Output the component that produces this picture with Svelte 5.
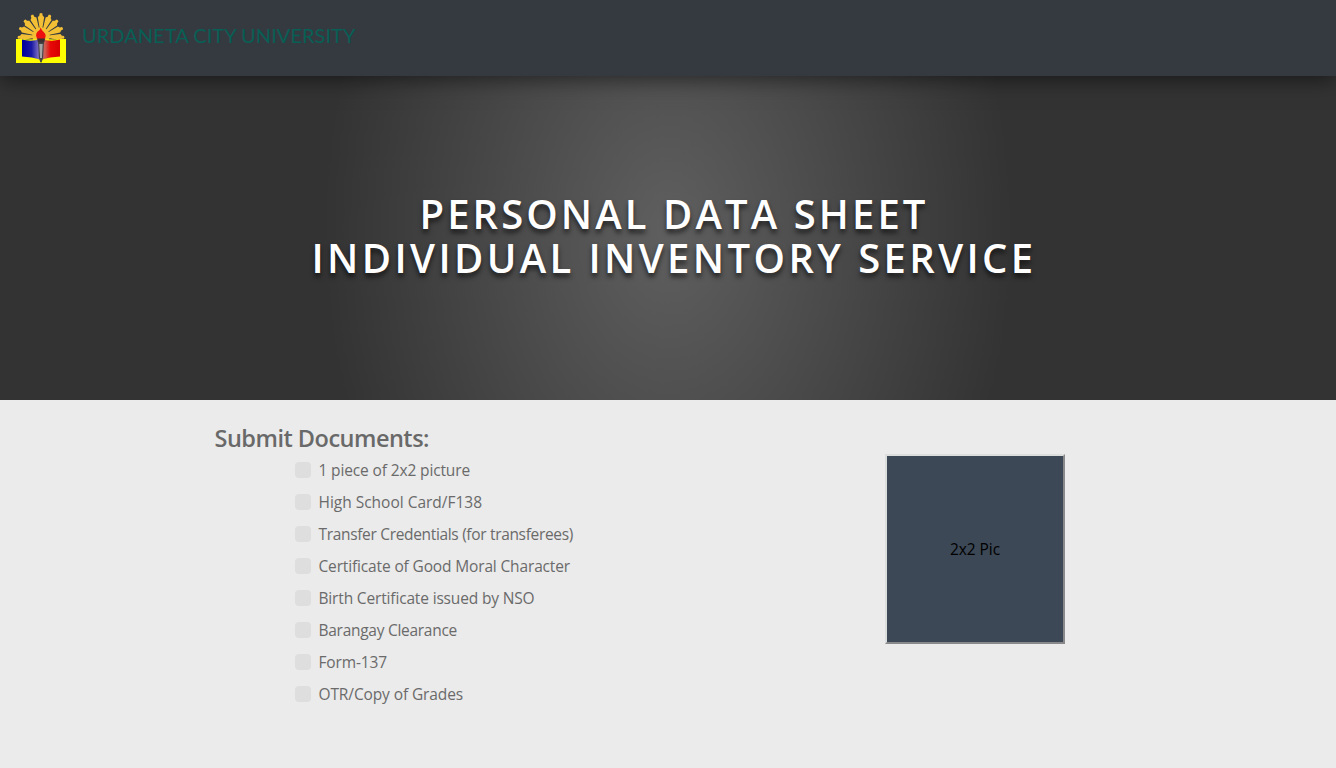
<script>
  const documents = [
    { label: '1 piece of 2x2 picture', width: 151.5 },
    { label: 'High School Card/F138', width: 163.5 },
    { label: 'Transfer Credentials (for transferees)', width: 254.5 },
    { label: 'Certificate of Good Moral Character', width: 251.5 },
    { label: 'Birth Certificate issued by NSO', width: 216 },
    { label: 'Barangay Clearance', width: 138.5 },
    { label: 'Form-137', width: 68.5 },
    { label: 'OTR/Copy of Grades', width: 144.5 }
  ];

  // Tracks a line of text so that it fills the given width.
  function fit(node, width) {
    const range = document.createRange();
    range.selectNodeContents(node);
    const base = parseFloat(getComputedStyle(node).letterSpacing) || 0;
    const natural = range.getBoundingClientRect().width;
    const count = node.textContent.length;
    node.style.letterSpacing = `${base + (width - natural) / count}px`;
  }

  const rays = [-92, -69, -46, -23, 0, 23, 46, 69, 92];
</script>

<header>
  <svg class="logo" viewBox="0 0 50 50" aria-hidden="true">
    <defs>
      <linearGradient id="book">
        <stop offset="0" stop-color="#00009c" />
        <stop offset=".25" stop-color="#1a18a4" />
        <stop offset=".42" stop-color="#7468c0" />
        <stop offset=".6" stop-color="#d06050" />
        <stop offset=".75" stop-color="#e80808" />
        <stop offset="1" stop-color="#d80000" />
      </linearGradient>
    </defs>
    <g fill="#f3c035">
      {#each rays as angle}
        <path
          transform="rotate({angle} 25 23.5)"
          d="M23.8 16 21.8 4.2 23.4 2.6 23.6 .6 25 0 26.4 .6 26.6 2.6 28.2 4.2 26.2 16z"
        />
      {/each}
      <circle cx="25" cy="23" r="8.8" />
    </g>
    <path fill="#ff0" d="M0 26h5l6 .6 8-.4 6 .8 6-.8 8 .4 6-.6h5v24H0z" />
    <path fill="url(#book)" d="M6 26.5q9 2.5 19-.5 10 3 19 .5v17q-10 .4-19 3.2-9-2.8-19-3.2z" />
    <path fill="#f3c035" d="M17 25a8 8 0 0 1 16 0l-4 2h-8z" />
    <path fill="#ee1010" d="M21.6 26q-3-3.6-.2-7.2 3-1.8 3.3-4.2 .8 3 3.2 4.6 3.2 3.2 .6 6.8z" />
    <path fill="#3d3034" d="M21 25.4h8.2l-1 4h-6.2z" />
    <path fill="#a5a5a5" stroke="#333" stroke-width=".9" d="M22.7 29.5h4.6l-.8 16L25 49.3l-1.5-3.8z" />
    <path fill="#444" d="M22.2 29.4h5.6v1.6h-5.6zM24 45h2v3.6h-2z" />
  </svg>
  <span class="brand" use:fit={273.5}>URDANETA CITY UNIVERSITY</span>
</header>

<section class="hero">
  <h1>
    <span use:fit={509}>PERSONAL DATA SHEET</span>
    <span use:fit={725}>INDIVIDUAL INVENTORY SERVICE</span>
  </h1>
</section>

<main>
  <section class="documents">
    <h2><span use:fit={214.5}>Submit Documents:</span></h2>
    <ul>
      {#each documents as item}
        <li><i class="box"></i><span use:fit={item.width}>{item.label}</span></li>
      {/each}
    </ul>
  </section>
  <div class="photo"><span use:fit={50}>2x2 Pic</span></div>
</main>

<style>
  :global(body) {
    margin: 0;
    background: #ebebeb;
    font-family: 'Open Sans', 'Noto Sans', sans-serif;
    overflow: hidden;
  }
  header {
    position: relative;
    z-index: 1;
    box-sizing: border-box;
    height: 76px;
    padding: 0 16px;
    display: flex;
    align-items: center;
    gap: 16px;
    background: #353a41;
    box-shadow: 0 4px 20px rgba(0, 0, 0, 0.5);
  }
  .logo {
    width: 50px;
    height: 50px;
  }
  .brand {
    font: 400 20px/30px Lato, sans-serif;
    color: #085f55;
    white-space: nowrap;
    margin-bottom: 6px;
  }
  .hero {
    height: 324px;
    display: flex;
    justify-content: center;
    background: radial-gradient(345px 490px at 50% 48%, #5f5f5f, #333);
  }
  h1 {
    margin: 116px 0 0 12px;
    display: flex;
    flex-direction: column;
    align-items: center;
    font-size: 40px;
    line-height: 44px;
    font-weight: 600;
    color: #fff;
    letter-spacing: 3px;
    text-shadow: 0 4px 5px rgba(0, 0, 0, 0.6);
  }
  h1 span {
    white-space: nowrap;
  }
  main {
    height: 368px;
    display: flex;
    justify-content: space-between;
    padding: 0 271px 0 214px;
    box-sizing: border-box;
    color: #6a6a6a;
  }
  h2 {
    margin: 23px 0 1px 0.5px;
    font-size: 23.5px;
    line-height: 30px;
    font-weight: 600;
    color: #696969;
    white-space: nowrap;
  }
  ul {
    margin: 0;
    padding: 0 0 0 81px;
    list-style: none;
  }
  li {
    display: flex;
    align-items: center;
    height: 32px;
    gap: 7.5px;
    font-size: 15.5px;
    line-height: 24px;
    white-space: nowrap;
  }
  .box {
    width: 16px;
    height: 16px;
    border-radius: 4px;
    background: #dedede;
  }
  .photo {
    box-sizing: border-box;
    width: 180px;
    height: 190px;
    margin-top: 54px;
    display: flex;
    align-items: center;
    justify-content: center;
    background: #3c4855;
    border: 2px solid;
    border-color: #dcdede #89898c #89898c #dcdede;
    color: #000;
    font-size: 15.5px;
    white-space: nowrap;
  }
</style>
